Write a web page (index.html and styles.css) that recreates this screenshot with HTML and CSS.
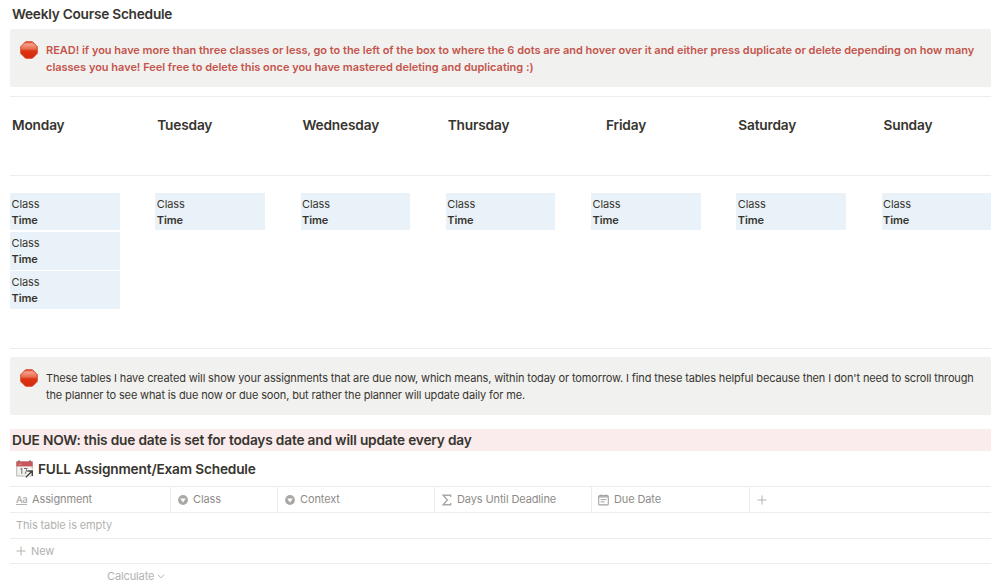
FILE: index.html
```html
<!DOCTYPE html>
<html lang="en">
<head>
  <meta charset="UTF-8" />
  <meta name="viewport" content="width=device-width, initial-scale=1.0" />
  <title>Weekly Course Schedule</title>
  <link rel="stylesheet" href="styles.css">
</head>
<body>

  <!-- Shared icons -->
  <svg class="sprite" aria-hidden="true">
    <defs>
      <linearGradient id="stopFill" x1="0" y1="0" x2="0" y2="1">
        <stop offset="0" stop-color="#e8513a" />
        <stop offset="0.15" stop-color="#f3a08a" />
        <stop offset="0.45" stop-color="#e8684a" />
        <stop offset="0.55" stop-color="#dc3510" />
        <stop offset="1" stop-color="#d52a0c" />
      </linearGradient>
    </defs>
    <symbol id="stop" viewBox="0 0 18 18">
      <path d="M5.6 .8h6.8l4.8 4.8v6.8l-4.8 4.8H5.6L.8 12.4V5.6z" fill="url(#stopFill)" stroke="#d63a20" stroke-width="1" />
    </symbol>
    <symbol id="select" viewBox="0 0 10 10">
      <circle cx="5" cy="5" r="4.9" fill="#a9a8a5" />
      <path d="M2.2 3.4h5.6L5 7.5z" fill="#fff" />
    </symbol>
    <symbol id="plus" viewBox="0 0 10 10">
      <path d="M5 .5v9M.5 5h9" stroke="#b3b2af" stroke-width="1" />
    </symbol>
  </svg>

  <main class="page">
    <h2 class="page-title">Weekly Course Schedule</h2>

    <div class="callout callout-red">
      <svg class="callout-icon"><use href="#stop" /></svg>
      <p>READ! if you have more than three classes or less, go to the left of the box to where the 6 dots are and hover over it and either press duplicate or delete depending on how many<br>classes you have! Feel free to delete this once you have mastered deleting and duplicating :)</p>
    </div>

    <div class="week week-days">
      <h3>Monday</h3>
      <h3>Tuesday</h3>
      <h3>Wednesday</h3>
      <h3>Thursday</h3>
      <h3 class="indent">Friday</h3>
      <h3>Saturday</h3>
      <h3>Sunday</h3>
    </div>

    <div class="week week-classes">
      <div class="day">
        <p class="class-box">Class<br><b>Time</b></p>
        <p class="class-box">Class<br><b>Time</b></p>
        <p class="class-box">Class<br><b>Time</b></p>
      </div>
      <div class="day"><p class="class-box">Class<br><b>Time</b></p></div>
      <div class="day"><p class="class-box">Class<br><b>Time</b></p></div>
      <div class="day"><p class="class-box">Class<br><b>Time</b></p></div>
      <div class="day"><p class="class-box">Class<br><b>Time</b></p></div>
      <div class="day"><p class="class-box">Class<br><b>Time</b></p></div>
      <div class="day"><p class="class-box">Class<br><b>Time</b></p></div>
    </div>

    <div class="tables-note">
      <div class="callout">
        <svg class="callout-icon"><use href="#stop" /></svg>
        <p>These tables I have created will show your assignments that are due now, which means, within today or tomorrow. I find these tables helpful because then I don't need to scroll through<br>the planner to see what is due now or due soon, but rather the planner will update daily for me.</p>
      </div>
    </div>

    <h2 class="due-now">DUE NOW: this due date is set for todays date and will update every day</h2>

    <h2 class="table-title">
      <svg class="calendar" viewBox="0 0 17 18">
        <path d="M.7 2h15.6v14H.7z" fill="#f1f1ef" stroke="#a5a4a2" stroke-width=".8" />
        <path d="M.4 1.4h16.2v5H.4z" fill="#c9565a" />
        <path d="M3 .3v2M14 .3v2" stroke="#66605e" stroke-width="1.2" />
        <path d="M2.5 4.2h3" stroke="#df9698" stroke-width="1" />
        <path d="M4.3 9.1l1.5-.9v5.7M8 8.5h3.2l-2 5.4" fill="none" stroke="#6f6e6b" stroke-width="1" />
        <path d="M9.5 17.5L16 11.2M11 10.9h5.3v5.3" fill="none" stroke="#fff" stroke-width="3.2" />
        <path d="M9.8 17.2L16 11.2M11.3 11h5v5" fill="none" stroke="#42413e" stroke-width="1.5" />
      </svg>
      <span>FULL Assignment/Exam Schedule</span>
    </h2>

    <div class="table">
      <div class="row row-head">
        <div class="cell">
          <span class="aa">Aa</span>
          <span>Assignment</span>
        </div>
        <div class="cell">
          <svg class="icon"><use href="#select" /></svg>
          <span>Class</span>
        </div>
        <div class="cell">
          <svg class="icon"><use href="#select" /></svg>
          <span>Context</span>
        </div>
        <div class="cell">
          <svg class="icon" viewBox="0 0 10 12">
            <path d="M8.7 2.9V1.2H1.2L5.4 6 1.2 10.8h7.5V9.1" fill="none" stroke="#a9a8a5" stroke-width="1.4" />
          </svg>
          <span>Days Until Deadline</span>
        </div>
        <div class="cell">
          <svg class="icon icon-date" viewBox="0 0 11 12">
            <path d="M1.7 1.6h7.6a1 1 0 0 1 1 1v7.3a1 1 0 0 1-1 1H1.7a1 1 0 0 1-1-1V2.6a1 1 0 0 1 1-1z" fill="none" stroke="#a3a29f" stroke-width="1.1" />
            <path d="M.7 2.8h9.6M2.8.4v1.5M8.2.4v1.5" stroke="#a3a29f" stroke-width="1.3" />
            <path d="M2.6 5.6h5.8M2.6 7.9h4" stroke="#a3a29f" stroke-width="1" />
          </svg>
          <span>Due Date</span>
        </div>
        <div class="cell cell-add">
          <svg class="icon"><use href="#plus" /></svg>
        </div>
      </div>
      <div class="row row-empty">This table is empty</div>
      <div class="row row-new">
        <svg class="icon"><use href="#plus" /></svg>
        <span>New</span>
      </div>
      <div class="row-calc">
        <span>Calculate</span>
        <svg class="chevron" viewBox="0 0 8 5"><path d="M1 .8l3 3 3-3" fill="none" stroke="#b3b2af" stroke-width="1" /></svg>
      </div>
    </div>
  </main>

</body>
</html>
```
FILE: styles.css
```css
* {
  box-sizing: border-box;
}
body {
  margin: 0;
  background: #fff;
  color: #37352f;
  font-family: Inter, sans-serif;
  font-size: 11px;
  line-height: 16.5px;
  letter-spacing: -0.12px;
  overflow: hidden;
}
h2, h3, p {
  margin: 0;
}
h2, h3 {
  font-size: 13.7px;
  font-weight: 600;
  letter-spacing: -0.18px;
  line-height: 18px;
  white-space: nowrap;
}
svg {
  display: block;
  flex: none;
}
.sprite {
  position: absolute;
  width: 0;
  height: 0;
}
.page {
  width: 981px;
  height: 581px;
  margin-left: 10px;
  padding-top: 5px;
}
.page-title {
  height: 24px;
  padding-left: 2px;
  letter-spacing: -0.25px;
}

/* Callouts */
.callout {
  display: flex;
  gap: 8px;
  height: 58px;
  padding: 13px 0 0 10px;
  border-radius: 2px;
  background: #f1f1ef;
  letter-spacing: -0.138px;
  white-space: nowrap;
}
.callout-icon {
  width: 18px;
  height: 18px;
  margin-top: -1px;
}
.callout-red {
  color: #c4554d;
  font-weight: 600;
  letter-spacing: -0.015px;
}

/* Week */
.week {
  display: grid;
  grid-template-columns: repeat(7, 109.5px);
  justify-content: space-between;
  border-top: 1px solid #ededec;
}
.week-days {
  height: 79px;
  margin-top: 9px;
  padding-top: 19px;
}
.week-days h3 {
  padding-left: 2px;
}
.week-days .indent {
  padding-left: 15px;
}
.week-classes {
  height: 173px;
  padding-top: 16.5px;
  line-height: 16.2px;
}
.day {
  display: flex;
  flex-direction: column;
  gap: 1.5px;
}
.class-box {
  height: 37.8px;
  padding: 3px 1.5px;
  background: #e9f2f8;
}
.class-box b {
  font-weight: 600;
}
.tables-note {
  padding-top: 8px;
  border-top: 1px solid #ededec;
}

/* Assignment table */
.due-now {
  height: 22px;
  margin-top: 14px;
  padding-left: 2px;
  background: #faebec;
  line-height: 22px;
}
.table-title {
  display: flex;
  align-items: center;
  gap: 5px;
  height: 35px;
  padding-left: 6px;
}
.calendar {
  width: 17px;
  height: 18px;
}
.table {
  color: #b3b2af;
}
.row {
  display: flex;
  align-items: center;
  height: 26px;
  border-top: 1px solid #ededec;
}
.row-head {
  color: #8d8c88;
}
.cell {
  display: flex;
  align-items: center;
  gap: 5px;
  height: 25px;
  padding-left: 6px;
  border-right: 1px solid #ededec;
  white-space: nowrap;
}
.cell:nth-child(1) {
  width: 161px;
}
.cell:nth-child(2) {
  width: 107px;
  padding-left: 7px;
}
.cell:nth-child(3) {
  width: 157px;
  padding-left: 7px;
}
.cell:nth-child(4) {
  width: 157px;
  padding-left: 7px;
}
.cell:nth-child(5) {
  width: 158px;
}
.cell-add {
  padding-left: 7px;
  border-right: 0;
}
.aa {
  width: 11px;
  border-bottom: 1px solid #b3b2af;
  color: #a9a8a5;
  font-size: 9.5px;
  font-weight: 500;
  letter-spacing: -0.4px;
  line-height: 9px;
}
.icon {
  width: 10px;
  height: 10px;
}
.cell .icon[viewBox] {
  height: 12px;
}
.cell .icon-date {
  width: 11px;
}
.row-empty {
  padding-left: 6px;
}
.row-new {
  gap: 5px;
  height: 25px;
  padding-left: 6px;
}
.row-calc {
  display: flex;
  align-items: center;
  gap: 3px;
  height: 18px;
  padding: 7px 0 0 97px;
  border-top: 1px solid #ededec;
  line-height: 10px;
}
.chevron {
  width: 8px;
  height: 5px;
}
```
